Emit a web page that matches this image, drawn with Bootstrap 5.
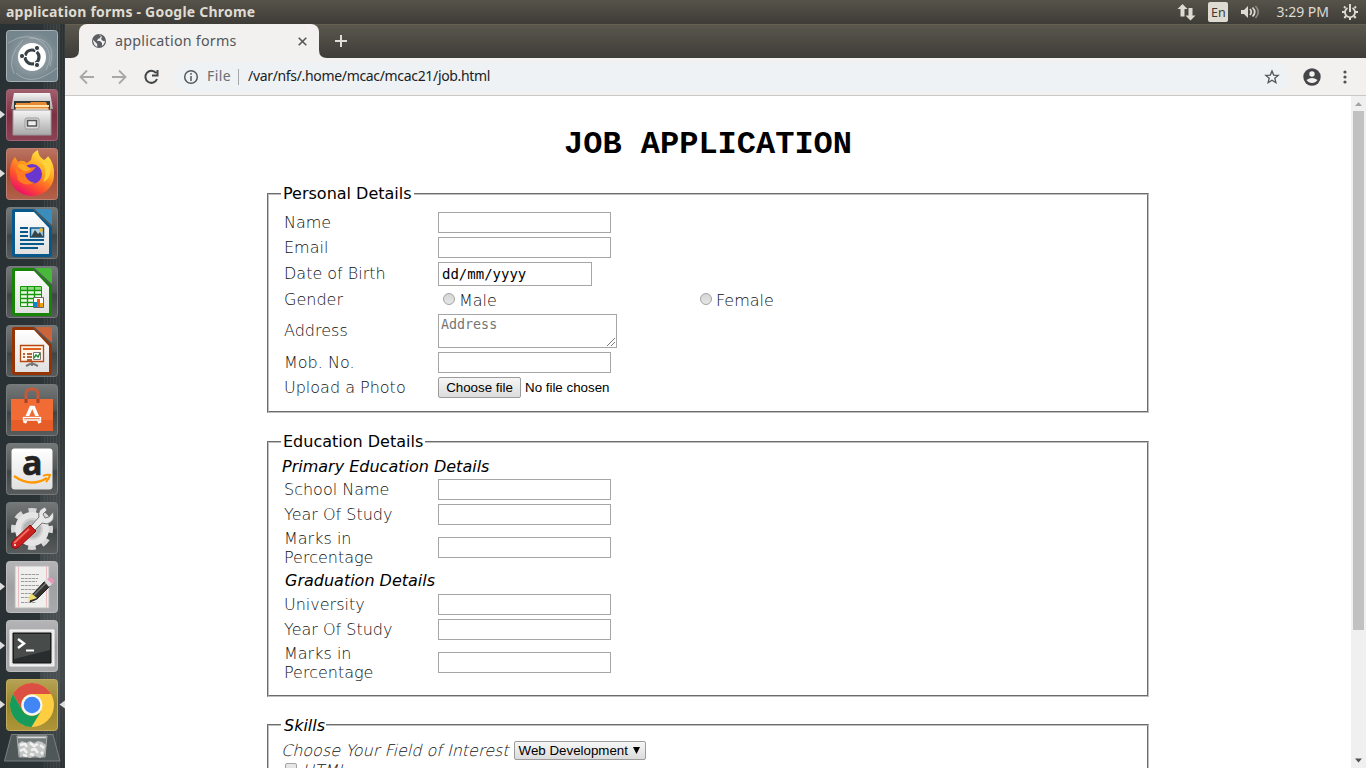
<!DOCTYPE html>
<html lang="en">
<head>
<meta charset="utf-8">
<meta name="viewport" content="width=device-width, initial-scale=1">
<title>application forms</title>
<link href="https://cdn.jsdelivr.net/npm/bootstrap@5.3.0/dist/css/bootstrap.min.css" rel="stylesheet">
<script src="https://cdn.jsdelivr.net/npm/bootstrap@5.3.0/dist/js/bootstrap.bundle.min.js"></script>
<style>
body{width:1366px;height:768px;font-family:"Noto Sans","Open Sans",sans-serif;line-height:1.2}
svg{display:block;flex:none}
.top-panel{height:24px;background:linear-gradient(#56534a,#3e3c37);color:#dfdbd2;font-size:14px}
.win-title{font-weight:700;padding-left:6px;letter-spacing:.22px}
.lang-box{width:20px;height:20px;border-radius:2px;background:#dfdbd2;color:#3c3b37;font-size:12.5px;margin:0 12px 0 11px}
.launcher{width:65px;padding-top:6px;gap:7px;background:linear-gradient(transparent 0 52%,rgba(120,128,130,.28) 68% 88%,transparent) 40px 0/25px 100% no-repeat,repeating-linear-gradient(90deg,transparent 0 2px,rgba(150,155,155,.12) 2px 3px) 42px 0/23px 100% no-repeat,linear-gradient(90deg,#2a3134 0,#2c3336 62%,#373d3f 90%,#262b2d 97%,#3a4041 100%)}
.tab-strip{height:34px;background:linear-gradient(#5a574e,#3e3c38);border-top:1px solid #68604f;padding-left:6px}
.tab-box{width:240px;height:34px;margin-top:-1px;background:#f2f1f0;border-radius:8px 8px 0 0;font-size:14.3px;letter-spacing:.24px;color:#54575b;padding:0 12px}
.tab-cut{width:8px;height:8px;margin-top:25px}
.tool-bar{height:38px;background:#f2f1f0;border-bottom:1px solid #c9c8c7;padding-left:14px}
.omni{width:1115px;height:30px;border-radius:15px;background:#eef2f4;margin-left:5px;padding:0 9px;font-size:14px;color:#6b6e72}
.omni-url{color:#202124;letter-spacing:-.33px}
.viewport-area{height:672px}
.doc{width:882px;margin:0 0 0 202px;font:16px/19px "DejaVu Sans",sans-serif;color:#000}
.doc h1{font:700 32px/36px "Liberation Mono",monospace;margin:31px 0 21px}
.group-box{border:2px groove #c0c0c0;padding:0 12px;min-width:0}
.doc legend{float:none;width:auto;font-size:16px;line-height:19px;margin:0;padding:0 2px;color:#000}
.skill-legend{position:relative;top:1px}
.thin{font-family:"DejaVu Sans Light","DejaVu Sans ExtraLight","DejaVu Sans",sans-serif;font-weight:200;color:#111}
.lab{width:154px;flex:none}
.lab span{display:block;width:130px}
.fld-row{margin:0 0 4px 3px;height:21px}
.txt-in{width:173px;height:21px;border:1px solid #a6a6a6;background:#fff;padding:0;margin:0;border-radius:0}
.even-row .lab{padding-bottom:1px}
.tall-row{height:38px}
.tall-row .txt-in{margin-bottom:1px}
.date-in{width:154px;height:24px;border:1px solid #a6a6a6;font:14px/22px "DejaVu Sans Mono",monospace;padding:0 3px}
.area-in{width:179px;height:34px;border:1px solid #a6a6a6;font:13.333px/16px "DejaVu Sans Mono",monospace;color:#757575;padding:2px;position:relative}
.area-in svg{position:absolute;right:1px;bottom:1px}
.sys-btn{font:13.333px/15px "Liberation Sans",sans-serif;border:1px solid #9c9c9c;border-radius:2px;background:linear-gradient(#f6f6f6,#dcdcdc);color:#000}
.dot{width:12px;height:12px;border:1px solid #a4a4a4;border-radius:50%;background:linear-gradient(#d5d5d5,#e6e6e6);margin-bottom:2px}
.tick{width:12px;height:12px;border:1px solid #a4a4a4;border-radius:2px;background:linear-gradient(#e8e8e8,#ddd);margin:0 0 3px 4px}
.scroll{width:15px;background:#f0f0f0}
.scroll-thumb{width:11px;height:519px;background:#c1c1c1}
</style>
</head>
<body class="overflow-hidden d-flex flex-column bg-white">
<svg width="0" height="0" class="position-absolute" aria-hidden="true"><defs>
<linearGradient id="glass" x2="0" y2="1"><stop offset="0" stop-color="#757878"/><stop offset=".5" stop-color="#505556"/><stop offset=".55" stop-color="#3f4546"/><stop offset="1" stop-color="#595c5d"/></linearGradient>
<linearGradient id="gray" x2="0" y2="1"><stop offset="0" stop-color="#f5f5f5"/><stop offset="1" stop-color="#a8a8a8"/></linearGradient>
<linearGradient id="paper" x2="0" y2="1"><stop offset="0" stop-color="#fff"/><stop offset="1" stop-color="#e0e0e0"/></linearGradient>
<linearGradient id="silver" x2="0" y2="1"><stop offset="0" stop-color="#b5b5b7"/><stop offset=".5" stop-color="#a0a0a2"/><stop offset="1" stop-color="#aaa9ab"/></linearGradient>
<linearGradient id="fire" x1=".8" y1="0" x2=".2" y2="1"><stop offset="0" stop-color="#fff04a"/><stop offset=".4" stop-color="#ffa020"/><stop offset=".7" stop-color="#ff4c30"/><stop offset="1" stop-color="#e80078"/></linearGradient>
<linearGradient id="wine" x2="0" y2="1"><stop offset="0" stop-color="#a0606e"/><stop offset=".5" stop-color="#7e2f42"/><stop offset="1" stop-color="#8a4354"/></linearGradient>
<linearGradient id="rust" x2="0" y2="1"><stop offset="0" stop-color="#bb7562"/><stop offset=".5" stop-color="#a44b33"/><stop offset="1" stop-color="#b2614b"/></linearGradient>
<linearGradient id="olive" x2="0" y2="1"><stop offset="0" stop-color="#b6a355"/><stop offset=".5" stop-color="#9a842b"/><stop offset="1" stop-color="#ae9538"/></linearGradient>
<radialGradient id="dash"><stop offset="0" stop-color="#a7b0b4"/><stop offset="1" stop-color="#75858d"/></radialGradient>
</defs></svg>

<header class="top-panel d-flex align-items-center flex-shrink-0">
  <div class="win-title">application forms - Google Chrome</div>
  <div class="ms-auto d-flex align-items-center">
    <svg width="20" height="18" viewBox="0 0 20 18" fill="#dfdbd2"><path d="M5.500 1L10.500 6H7.500V13.500H3.500V6H.5zM13.500 17.500L8.500 12.500H11.500V5H15.500V12.500H18.500z"/></svg>
    <div class="lang-box d-flex align-items-center justify-content-center">En</div>
    <svg width="21" height="18" viewBox="0 0 21 18" fill="none" stroke="#dfdbd2" stroke-width="1.700"><path d="M1 7H4L8 3V15L4 11H1z" fill="#dfdbd2" stroke="none"/><path d="M10 6Q12.500 9 10 12M12.500 4.500Q17 9 12.500 13.500"/><path d="M15.500 3Q21 9 15.500 15" stroke="#8b8880"/></svg>
    <div style="margin-left:15px">3:29 PM</div>
    <svg style="margin:0 8px 0 13px" width="16" height="18" viewBox="0 0 16 18" fill="none" stroke="#dfdbd2"><path d="M5.500 5A5 5 0 1 0 10.500 5" stroke-width="1.800"/><path d="M8 1V9" stroke-width="2"/><path d="M3.500 5L2 3.500M12.500 5L14 3.500M3 9H0M13 9H16M4 13L2.300 15M12 13L13.700 15M8 14V17" stroke-width="2"/></svg>
  </div>
</header>

<div class="d-flex flex-grow-1" style="min-height:0">
<nav class="launcher d-flex flex-column flex-shrink-0 overflow-hidden">
  <svg width="65" height="52"><rect x="6.500" y=".5" width="51" height="51" rx="3" fill="url(#dash)" stroke="#a8b2b6"/><g fill="none" stroke="#c0c9cc" stroke-opacity=".5"><path d="M8 13Q28 0 43 13Q55 24 46 40M14 44Q6 27 23 10M16 43Q32 58 57 38M29 8Q58 8 50 36"/></g><circle cx="32" cy="27" r="14" fill="#fff"/><circle cx="32" cy="27" r="7" fill="none" stroke="#394347" stroke-width="3.200" stroke-dasharray="13.200 1.460" stroke-dashoffset="6"/><g fill="#394347" stroke="#fff"><circle cx="22" cy="26" r="2.600"/><circle cx="37" cy="18" r="2.600"/><circle cx="37" cy="35" r="2.600"/></g></svg>
  <svg width="65" height="52"><path d="M0 21.500L5 25.500L0 29.500z" fill="#ddd"/><rect x="6.500" y=".5" width="51" height="51" rx="3" fill="url(#wine)" stroke="#a66375"/><path d="M14 4H50L53 20H11z" fill="url(#gray)"/><path d="M14 12H50V25H14z" fill="#30383a"/><path d="M16 14H30L31 13H46L49 20V25H15z" fill="#e68a36"/><path d="M15 16H49V18H15z" fill="#ffe2ac"/><path d="M16 19.500H48V21H16z" fill="#fff0d5"/><path d="M13 21H51V46H13z" fill="url(#gray)" stroke="#999"/><rect x="25" y="29" width="14" height="11" rx="2" fill="#ddd" stroke="#999"/><path d="M27.500 31.500H36.500V37H27.500z" fill="#eee" stroke="#555" stroke-width="1.500"/></svg>
  <svg width="65" height="52"><path d="M0 21.500L5 25.500L0 29.500z" fill="#ddd"/><rect x="6.500" y=".5" width="51" height="51" rx="3" fill="url(#rust)" stroke="#c28172"/><path d="M10 27Q9 16 15 9L18 14Q22 11 27 15L31 12Q32 4 38 2Q38 8 44 12Q48 9 48 8Q55 16 54 28A22 20.500 0 0 1 10 27z" fill="url(#fire)"/><circle cx="32" cy="26" r="10" fill="#6936cf"/><path d="M15 20Q20 17 27 20L36 19Q32 25 25 26Q26 33 35 35Q24 39 18 32z" fill="#ff7a20"/><path d="M17 18Q20 13 31 21Q27 25 22 22z" fill="#ffaa22"/><path d="M40 12Q49 22 43 34Q53 30 50 13" fill="#ffd239"/></svg>
  <svg width="65" height="52"><rect x="6.500" y=".5" width="51" height="51" rx="3" fill="url(#glass)" stroke="#777b7c"/><path d="M14 2H36L52 19V47Q52 50 49 50H15Q12 50 12 47V4Q12 2 14 2z" fill="#07598b"/><path d="M15 5H34L49 21V47H15z" fill="url(#paper)"/><path d="M34 2H50Q52 2 52 4V18z" fill="#3b8dbe"/><path d="M33.500 2L52.500 20" stroke="#525a5c" stroke-width="1.500"/><g stroke="#07598b" stroke-width="2"><path d="M20 21H28M20 25H28M20 29H28M20 33H44M20 37H44M20 41H38"/></g><path d="M30.500 21H43.500V30H30.500z" fill="#aecfe2" stroke="#07598b" stroke-width="1.500"/><path d="M31 30L35 23L38 27L40 25L43 30z" fill="#354346"/><circle cx="41" cy="23" r="2" fill="#eab839"/></svg>
  <svg width="65" height="52"><rect x="6.500" y=".5" width="51" height="51" rx="3" fill="url(#glass)" stroke="#777b7c"/><path d="M14 2H36L52 19V47Q52 50 49 50H15Q12 50 12 47V4Q12 2 14 2z" fill="#168506"/><path d="M15 5H34L49 21V47H15z" fill="url(#paper)"/><path d="M34 2H50Q52 2 52 4V18z" fill="#48b83b"/><path d="M33.500 2L52.500 20" stroke="#525a5c" stroke-width="1.500"/><path d="M20.500 20.500H41.500V40.500H20.500z" fill="#effbea" stroke="#18970c"/><path d="M21 21H41V24H21z" fill="#8edc7f"/><path d="M20 24.500H42M20 28.500H42M20 32.500H42M20 36.500H42M27.500 20V41M34.500 20V41" stroke="#18970c" stroke-width="1.300"/><path d="M33.500 31.500H43.500V41.500H33.500z" fill="#fff" stroke="#666"/><path d="M34 36H37V41H34z" fill="#0b87d1"/><path d="M37 33H40V41H37z" fill="#e45d11"/><path d="M40 37H43V41H40z" fill="#e5a313"/></svg>
  <svg width="65" height="52"><rect x="6.500" y=".5" width="51" height="51" rx="3" fill="url(#glass)" stroke="#777b7c"/><path d="M14 2H36L52 19V47Q52 50 49 50H15Q12 50 12 47V4Q12 2 14 2z" fill="#963406"/><path d="M15 5H34L49 21V47H15z" fill="url(#paper)"/><path d="M34 2H50Q52 2 52 4V18z" fill="#ca653b"/><path d="M33.500 2L52.500 20" stroke="#525a5c" stroke-width="1.500"/><path d="M20.500 20.500H43.500V36.500H20.500z" fill="#fff4e9" stroke="#b94711" stroke-width="1.300"/><path d="M23 24H41" stroke="#e0621a" stroke-width="2"/><path d="M23 29H25M23 32H25M27 29H32M27 32H32M27 35H32" stroke="#963406" stroke-width="1.500"/><path d="M33.500 27.500H40.500V34.500H33.500z" fill="#fff" stroke="#777"/><path d="M34 33L36 30L38 32L40 28" stroke="#228b32" stroke-width="1.500" fill="none"/><path d="M32 37V41M26 41L32 38L38 41" fill="none" stroke="#777" stroke-width="2"/></svg>
  <svg width="65" height="52"><rect x="6.500" y=".5" width="51" height="51" rx="3" fill="url(#glass)" stroke="#777b7c"/><path d="M26 18V10Q26 5 32 5T38 10V18" fill="none" stroke="#c35b3b" stroke-width="3"/><path d="M11 15H53V47H11z" fill="#f16b34"/><path d="M11 36H53V47H11z" fill="#e75d27"/><path d="M26 15V19M38 15V19" stroke="#a64324" stroke-width="3"/><path d="M24.500 39L31 23.500H33.500L40 39" stroke="#fff" stroke-width="3.400" fill="none"/><path d="M22 34.500H42" stroke="#e75d27" stroke-width="5"/><path d="M23.500 33.500H40.500V36H23.500z" fill="#e75d27" stroke="#fff" stroke-width="1.500"/></svg>
  <svg width="65" height="52" class="overflow-visible"><rect x="6.500" y=".5" width="51" height="51" rx="3" fill="url(#glass)" stroke="#777b7c"/><rect x="11.500" y="5.500" width="41" height="41" rx="3" fill="url(#paper)"/><text x="22" y="32" font-family="Open Sans,sans-serif" font-size="34" font-weight="700" fill="#222" stroke="#222" stroke-width=".6">a</text><path d="M14 33Q31 45 47 35" fill="none" stroke="#ff9800" stroke-width="2.400"/><path d="M43 33Q46 31 50 32Q49 36 46 39" fill="none" stroke="#ff9800" stroke-width="2"/></svg>
  <svg width="65" height="52"><rect x="6.500" y=".5" width="51" height="51" rx="3" fill="url(#glass)" stroke="#777b7c"/><circle cx="32" cy="27" r="18.500" fill="none" stroke="#d8d8d8" stroke-width="5" stroke-dasharray="7.800 6.730" stroke-dashoffset="4"/><circle cx="32" cy="27" r="13" fill="none" stroke="#e5e5e5" stroke-width="8"/><circle cx="32" cy="27" r="10" fill="#b4b6b6" stroke="#cfcfcf" stroke-width="2"/><path d="M31 24L39 15Q37 8 45 5L47 8L43 12L45 16L49 15L53 10Q56 19 47 22L42 21L34 29z" fill="#e8e8e8" stroke="#777"/><path d="M30 23L36 29L19 45Q15 48 12 45Q10 42 13 39z" fill="#ca2020" stroke="#8d1010"/><path d="M29 27L14 41" stroke="#f06a60" stroke-width="2"/><circle cx="15" cy="43" r="1" fill="#fff"/></svg>
  <svg width="65" height="52"><path d="M0 21.500L5 25.500L0 29.500z" fill="#ddd"/><rect x="6.500" y=".5" width="51" height="51" rx="3" fill="url(#silver)" stroke="#bcbcbc"/><path d="M15 5H49V47H15z" fill="#efefed" stroke="#bbb"/><path d="M18.500 5V46M46.500 5V46" stroke="#e9bcc2"/><g stroke="#9b9b9b"><path d="M21 13.500H39M21 17.500H38M21 20.500H37M21 24.500H39M21 28.500H38M21 32.500H35M21 36.500H34M21 41.500H36" stroke-dasharray="3 .7"/></g><path d="M30 41L32 34L45 20L50 25L37 38z" fill="#333" stroke="#222"/><path d="M25 40L28 32L34 37z" fill="#f1dd6c" transform="translate(3)"/><path d="M34 34L46 22" stroke="#777" stroke-width="1.500"/><path d="M44 20L47 17L53 22L49 26z" fill="#ddd"/><path d="M47 18Q50 15 53 18T52 23z" fill="#e897ba"/></svg>
  <svg width="65" height="52"><path d="M0 21.500L5 25.500L0 29.500z" fill="#ddd"/><rect x="6.500" y=".5" width="51" height="51" rx="3" fill="url(#silver)" stroke="#bcbcbc"/><path d="M10 10H54V46H10z" fill="#e6e6e6" stroke="#fafafa"/><path d="M13 13H51V43H13z" fill="#292d2d" stroke="#111"/><path d="M14 14H50V30L14 39z" fill="#474b4a"/><path d="M18 19L24 23.500L18 28" fill="none" stroke="#fff" stroke-width="2.400"/><path d="M26 30.500H34" stroke="#fff" stroke-width="2"/></svg>
  <svg width="65" height="52"><path d="M0 21.500L5 25.500L0 29.500zM65 21.500L59.500 25.500L65 29.500z" fill="#ddd"/><rect x="6.500" y=".5" width="51" height="51" rx="3" fill="url(#olive)" stroke="#c2ad5f"/><circle cx="32" cy="26" r="22" fill="#ffcd42"/><path d="M12.950 15A22 22 0 0 1 51.050 15H32A11 11 0 0 0 22.500 31.500z" fill="#dc4f43"/><path d="M12.950 15A22 22 0 0 0 31.500 48L41.500 31.500A11 11 0 0 1 22.500 31.500z" fill="#169b5b"/><circle cx="32" cy="26" r="10.500" fill="#f4f7fa"/><circle cx="32" cy="26" r="8.300" fill="#4286f5"/></svg>
  <svg width="65" height="35" style="margin-top:-5px"><path d="M11.500 1.500H53L60 28H4.500z" fill="#505759" stroke="#7b8081"/><path d="M17 3H47L45 24H19z" fill="#757b7b" stroke="#a7abab"/><path d="M18 4.500H46" stroke="#d8dada" stroke-width="1.500"/><path d="M18 11L22 8L26 10L30 8L34 10L38 8L42 9L46 12L44 23L40 25L35 23L30 25L24 23L20 24z" fill="#c4c5c5"/><path d="M20 12L25 11L27 14M30 10L34 13L38 11M40 12L44 15M20 18L24 16L27 20M31 17L35 16L38 20M41 19L43 21M23 22L27 23M30 21L34 22" stroke="#f2f2f2" stroke-width="2.500" fill="none"/></svg>
</nav>

<main class="flex-grow-1" style="min-width:0">
  <div class="tab-strip d-flex">
    <svg class="tab-cut" viewBox="0 0 8 8"><path d="M8 0V8H0Q8 8 8 0z" fill="#f2f1f0"/></svg>
    <div class="tab-box d-flex align-items-center">
      <svg width="16" height="16" viewBox="0 0 16 16"><circle cx="8" cy="8" r="7" fill="#5c6064"/><path d="M2.200 7L6.200 11V14L3.500 12L2 8zM6 2.500L8 2L10 3L9 5L7 6L6 8H9L11 10V13L13 11L14 8L12 8L10 6L11 4L9 1.700z" fill="#f2f1f0"/></svg>
      <span class="ms-2">application forms</span>
      <svg class="ms-auto" width="9" height="9" viewBox="0 0 9 9" stroke="#55585b" stroke-width="1.600"><path d="M.7 .7L8.300 8.300M8.300 .7L.7 8.300"/></svg>
    </div>
    <svg class="tab-cut" viewBox="0 0 8 8"><path d="M0 0V8H8Q0 8 0 0z" fill="#f2f1f0"/></svg>
    <svg width="14" height="14" viewBox="0 0 14 14" stroke="#dfddd9" stroke-width="2" style="margin:9px 0 0 7px"><path d="M1 7H13M7 1V13"/></svg>
  </div>
  <div class="tool-bar d-flex align-items-center">
    <svg width="90" height="18" viewBox="0 0 90 18" fill="none" stroke="#a9a8a8" stroke-width="1.800"><path d="M15 9H1.500M8 2.500L1.500 9L8 15.500M33 9H46.500M40 2.500L46.500 9L40 15.500"/><path d="M77 5A6 6 0 1 0 78 11M78.500 2V7.500H73" stroke="#434547" stroke-width="2"/></svg>
    <div class="omni d-flex align-items-center">
      <svg width="16" height="16" viewBox="0 0 16 16" fill="none" stroke="#56595d" stroke-width="1.500"><circle cx="8" cy="8" r="6.300"/><path d="M8 7V12M8 4V5.700"/></svg>
      <span class="ms-2" style="letter-spacing:.4px">File</span><span style="width:1px;height:16px;background:#a5a8aa;margin:0 9px 0 7px"></span>
      <span class="omni-url">/var/nfs/.home/mcac/mcac21/job.html</span>
      <svg class="ms-auto" width="16" height="16" viewBox="0 0 16 16" fill="none" stroke="#505356" stroke-width="1.300"><path d="M8 2L9.700 6.100L14.200 6.400L10.800 9.300L11.900 13.700L8 11.300L4.100 13.700L5.200 9.300L1.800 6.400L6.300 6.100z"/></svg>
    </div>
    <svg width="18" height="18" viewBox="0 0 18 18" style="margin-left:14px"><circle cx="9" cy="9" r="8.700" fill="#434548"/><circle cx="9" cy="6" r="2.700" fill="#f2f1f0"/><path d="M3.500 12Q9 8 14.500 12Q12.500 15 9 15T3.500 12z" fill="#f2f1f0"/></svg>
    <svg width="6" height="14" viewBox="0 0 6 14" fill="#505255" style="margin-left:21px"><circle cx="3" cy="2" r="1.600"/><circle cx="3" cy="7" r="1.600"/><circle cx="3" cy="12" r="1.600"/></svg>
  </div>

  <div class="viewport-area d-flex">
    <div class="flex-grow-1 overflow-hidden">
      <form class="doc">
        <h1 class="text-center">JOB APPLICATION</h1>
        <fieldset class="group-box" style="height:229px">
          <legend>Personal Details</legend>
          <div class="thin" style="padding-top:9px">
            <div class="fld-row d-flex align-items-center"><label class="lab">Name</label><input class="txt-in"></div>
            <div class="fld-row d-flex align-items-center"><label class="lab">Email</label><input class="txt-in"></div>
            <div class="fld-row even-row d-flex align-items-center" style="height:24px"><label class="lab">Date of Birth</label><div class="date-in text-black fw-normal">dd/mm/yyyy</div></div>
            <div class="fld-row even-row d-flex align-items-center" style="height:20px"><label class="lab">Gender</label>
              <div class="d-flex align-items-center" style="width:257px;padding-left:5px"><span class="dot"></span><span style="margin:1px 0 0 4px">Male</span></div>
              <div class="d-flex align-items-center" style="padding-left:5px"><span class="dot"></span><span style="margin:1px 0 0 4px">Female</span></div></div>
            <div class="fld-row even-row d-flex align-items-center" style="height:34px"><label class="lab">Address</label><div class="area-in fw-normal">Address<svg width="8" height="8" viewBox="0 0 8 8" stroke="#777"><path d="M0 8L8 0M4 8L8 4"/></svg></div></div>
            <div class="fld-row d-flex align-items-center"><label class="lab">Mob. No.</label><input class="txt-in"></div>
            <div class="fld-row d-flex align-items-center"><label class="lab">Upload a Photo</label><button type="button" class="sys-btn" style="width:83px;height:21px;padding:0">Choose file</button><span class="sys-btn border-0" style="background:none;margin-left:4px">No file chosen</span></div>
          </div>
        </fieldset>
        <fieldset class="group-box" style="height:265px;margin-top:19px">
          <legend>Education Details</legend>
          <div class="fst-italic" style="padding:6px 0 3px 1px">Primary Education Details</div>
          <div class="thin">
            <div class="fld-row d-flex align-items-center"><label class="lab">School Name</label><input class="txt-in"></div>
            <div class="fld-row d-flex align-items-center"><label class="lab">Year Of Study</label><input class="txt-in"></div>
            <div class="fld-row tall-row d-flex align-items-center"><label class="lab"><span>Marks in Percentage</span></label><input class="txt-in"></div>
          </div>
          <div class="fst-italic" style="padding:0 0 4px 4px">Graduation Details</div>
          <div class="thin">
            <div class="fld-row d-flex align-items-center"><label class="lab">University</label><input class="txt-in"></div>
            <div class="fld-row d-flex align-items-center"><label class="lab">Year Of Study</label><input class="txt-in"></div>
            <div class="fld-row tall-row d-flex align-items-center"><label class="lab"><span>Marks in Percentage</span></label><input class="txt-in"></div>
          </div>
        </fieldset>
        <fieldset class="group-box fst-italic" style="height:150px;margin-top:18px">
          <legend class="ps-1" style="padding-left:3px!important;padding-right:1px"><span class="skill-legend">Skills</span></legend>
          <div class="thin" style="padding-top:7px">
            <div class="d-flex align-items-center" style="height:19px"><span style="margin-top:-1px">Choose Your Field of Interest</span><span class="sys-btn fst-normal fw-normal d-flex align-items-center justify-content-between" style="width:132px;height:19px;margin-left:5px;padding:0 5px 0 4px">Web Development<svg width="7" height="7" viewBox="0 0 7 7"><path d="M0 0H7L3.500 7z"/></svg></span></div>
            <div class="d-flex align-items-center" style="padding-top:1px"><span class="tick"></span><span style="margin-left:5px">HTML</span></div>
          </div>
        </fieldset>
      </form>
    </div>
    <div class="scroll d-flex flex-column align-items-center">
      <svg width="15" height="15" viewBox="0 0 15 15"><path d="M7.500 6L11 10H4z" fill="#a3a3a3"/></svg>
      <div class="scroll-thumb"></div>
      <svg class="mt-auto" width="15" height="15" viewBox="0 0 15 15"><path d="M7.500 9.500L11 5.500H4z" fill="#505050"/></svg>
    </div>
  </div>
</main>
</div>
</body>
</html>
